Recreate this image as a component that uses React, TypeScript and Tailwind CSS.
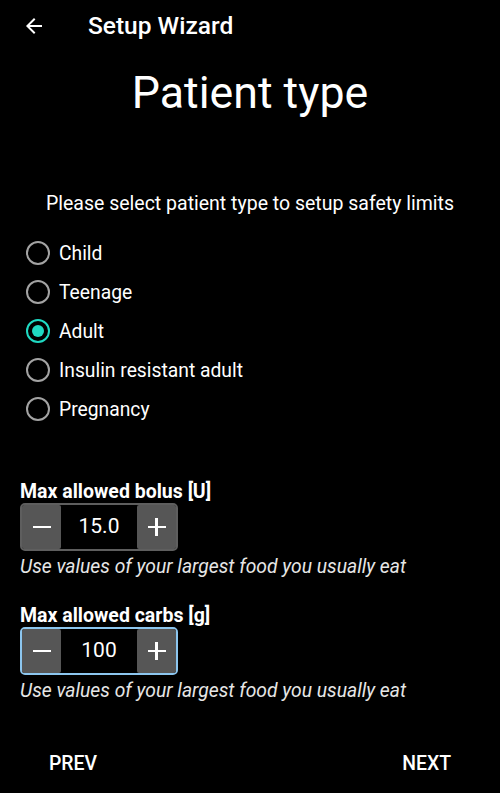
import { useState } from 'react';

const patientTypes = ['Child', 'Teenage', 'Adult', 'Insulin resistant adult', 'Pregnancy'];

function Radio({ checked }: { checked: boolean }) {
  return (
    <span
      className={`flex h-[24px] w-[24px] items-center justify-center rounded-full border-2 ${
        checked ? 'border-[#1fd9c2]' : 'border-[#a3a3a3]'
      }`}
    >
      {checked && <span className="h-[12px] w-[12px] rounded-full bg-[#1fd9c2]" />}
    </span>
  );
}

function NumberPicker({ value, focused }: { value: string; focused?: boolean }) {
  return (
    <div
      className={`flex h-[48px] w-[158px] rounded-[5px] border-2 ${
        focused ? 'border-[#8cc6ef]' : 'border-[#5e5e5e]'
      }`}
    >
      <button className="flex w-[39px] items-center justify-center rounded-[2px] bg-[#565656]">
        <span className="h-[2.5px] w-[18px] bg-white" />
      </button>
      <div className="flex flex-1 items-center justify-center text-[21px] text-white">{value}</div>
      <button className="relative flex w-[39px] items-center justify-center rounded-[2px] bg-[#565656]">
        <span className="h-[2.5px] w-[18px] bg-white" />
        <span className="absolute h-[18px] w-[2.5px] bg-white" />
      </button>
    </div>
  );
}

export default function App() {
  const [selected, setSelected] = useState('Adult');

  return (
    <div className="flex h-[793px] w-[500px] flex-col bg-black text-white [font-family:Roboto,'Noto_Sans',sans-serif]">
      {/* toolbar */}
      <div className="flex h-[52px] items-center">
        <svg className="ml-[22px]" width="24" height="24" viewBox="0 0 24 24">
          <path d="M20 11H7.83l5.59-5.59L12 4l-8 8 8 8 1.41-1.41L7.83 13H20v-2z" fill="white" />
        </svg>
        <span className="ml-[42px] text-[24.5px] font-medium">Setup Wizard</span>
      </div>

      <h1 className="mt-[15px] h-[48px] text-center text-[44.7px] leading-[52px]">Patient type</h1>

      <p className="mt-[76px] h-[24px] text-center text-[19.5px] leading-[26px]">
        Please select patient type to setup safety limits
      </p>

      <div className="mt-[18px] flex flex-col pl-[26px]">
        {patientTypes.map((t) => (
          <div
            key={t}
            className="flex h-[39px] cursor-pointer items-center gap-[9px]"
            onClick={() => setSelected(t)}
          >
            <Radio checked={selected === t} />
            <span className="pt-[3px] text-[19.3px]">{t}</span>
          </div>
        ))}
      </div>

      <div className="px-[20px]">
        <div className="mt-[52px] h-[22px] text-[19.5px] font-bold leading-[24px]">Max allowed bolus [U]</div>
        <div className="mt-[1px]">
          <NumberPicker value="15.0" />
        </div>
        <div className="mt-[4px] h-[22px] text-[19.3px] italic leading-[24px] text-[#e6e6e6]">
          Use values of your largest food you usually eat
        </div>

        <div className="mt-[27px] h-[22px] text-[19.5px] font-bold leading-[24px]">Max allowed carbs [g]</div>
        <div className="mt-[1px]">
          <NumberPicker value="100" focused />
        </div>
        <div className="mt-[4px] h-[22px] text-[19.3px] italic leading-[24px] text-[#e6e6e6]">
          Use values of your largest food you usually eat
        </div>
      </div>

      <div className="mt-auto flex h-[58px] items-center justify-between px-[49px] text-[19.4px] font-medium">
        <button>PREV</button>
        <button>NEXT</button>
      </div>
    </div>
  );
}
